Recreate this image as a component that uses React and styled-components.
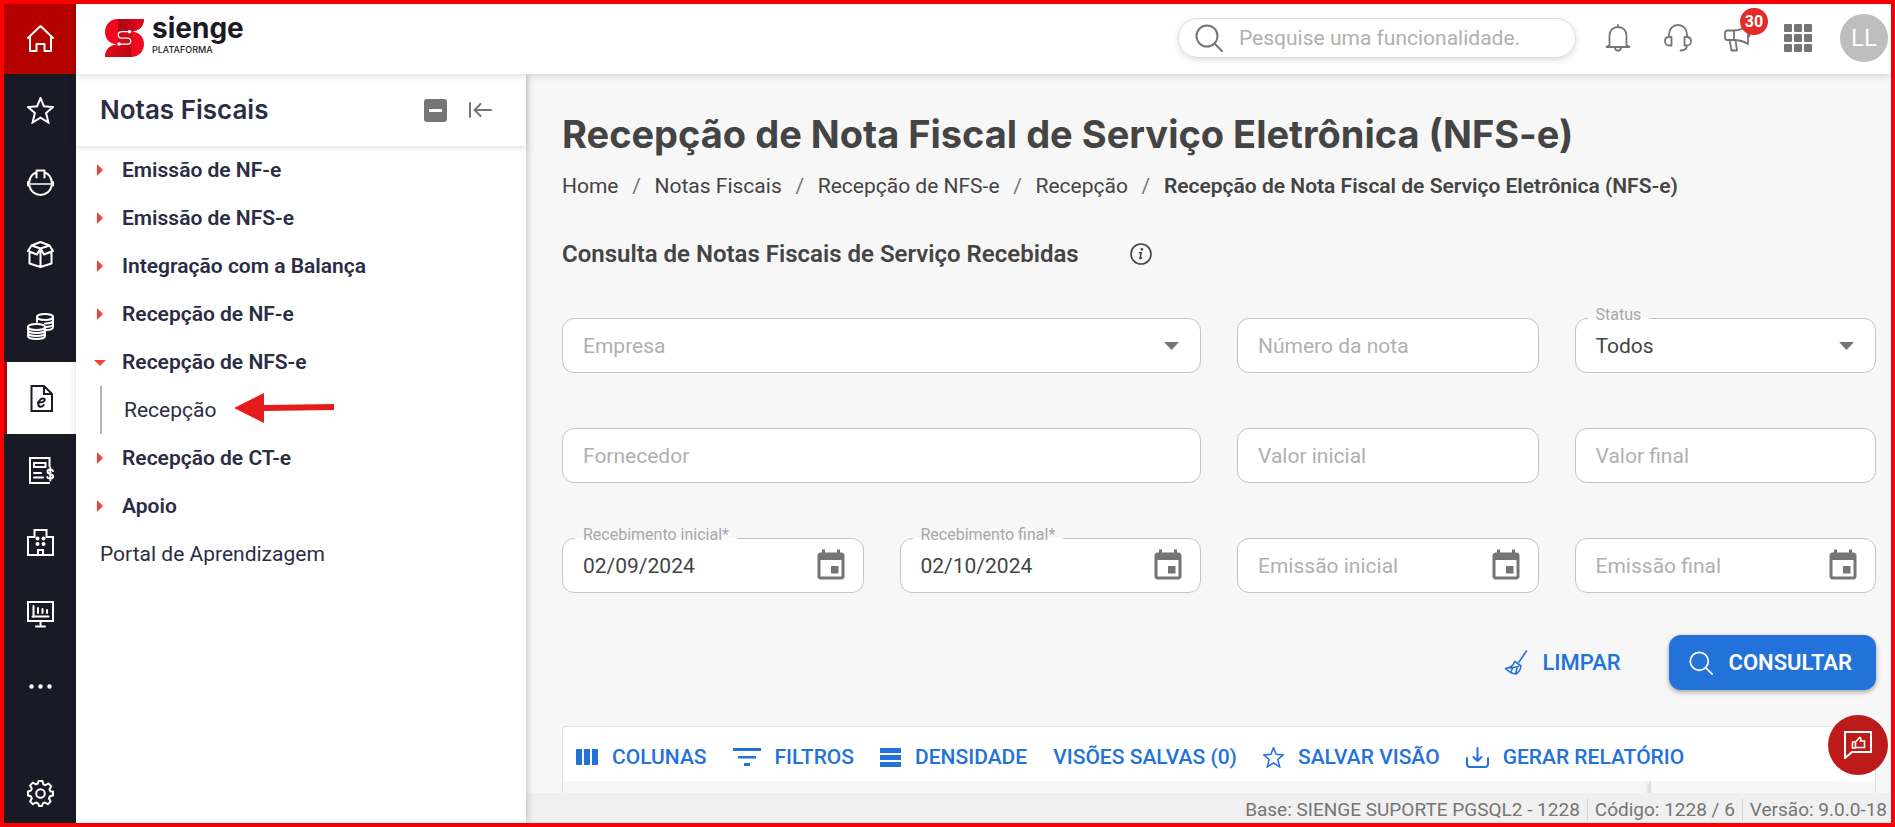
import React from "react";
import styled, { createGlobalStyle, css } from "styled-components";

const color = {
  frame: "#ff0000",
  brand: "#b80000",
  rail: "#1a1a27",
  navy: "#2b2d45",
  text: "#444444",
  muted: "#757575",
  hint: "#b0b0b0",
  line: "#c4c4c4",
  page: "#f7f7f7",
  blue: "#2372d9",
};

const GlobalStyle = createGlobalStyle`
  *, *::before, *::after { box-sizing: border-box; }
  html, body { margin: 0; overflow: hidden; }
  body, button, input, select {
    font-family: Roboto, "Liberation Sans", sans-serif;
    color: ${color.text};
  }
  button { border: 0; padding: 0; background: none; cursor: pointer; }
  a { color: inherit; text-decoration: none; }
  h1, h2, p, ul, ol { margin: 0; padding: 0; list-style: none; }
  svg { display: block; flex: none; }
`;

const Frame = styled.div`
  display: flex;
  height: 100vh;
  border: 4px solid ${color.frame};
  background: #fff;
`;

const Rail = styled.nav`
  flex: none;
  width: 72px;
  display: flex;
  flex-direction: column;
  background: ${color.rail};
`;

const RailButton = styled.button`
  flex: none;
  display: flex;
  align-items: center;
  justify-content: center;
  height: 72px;
  color: #fff;
  ${(p) => p.$kind === "home" && css`height: 70px; padding-bottom: 2px; background: #b50000;`}
  ${(p) => p.$kind === "settings" && css`height: 60px; margin-top: auto;`}
  ${(p) => p.$kind === "active" && css`
    background: #fff;
    color: ${color.rail};
    border-left: 3px solid ${color.brand};
  `}
`;

const Shell = styled.div`
  flex: 1;
  min-width: 0;
  display: flex;
  flex-direction: column;
`;

const TopBar = styled.header`
  position: relative;
  z-index: 2;
  flex: none;
  height: 70px;
  display: flex;
  align-items: center;
  justify-content: space-between;
  padding: 0 3px 2px 29px;
  background: #fff;
  box-shadow: 0 1px 8px rgba(0, 0, 0, 0.16);
`;

const Brand = styled.a`
  display: flex;
  align-items: center;
  gap: 8px;
`;

const BrandText = styled.span`
  display: flex;
  flex-direction: column;
  color: ${color.rail};
`;

const BrandName = styled.span`
  font: 700 28px/24px Inter, sans-serif;
`;

const BrandTag = styled.span`
  font: 500 9px/20px Inter, sans-serif;
`;

const TopTools = styled.div`
  display: flex;
  align-items: center;
`;

const Search = styled.label`
  display: flex;
  align-items: center;
  gap: 16px;
  width: 398px;
  height: 40px;
  margin-right: 12px;
  padding: 0 16px;
  border: 1px solid #dcdcdc;
  border-radius: 20px;
  color: ${color.muted};
  box-shadow: 0 2px 6px rgba(0, 0, 0, 0.14);
`;

const SearchInput = styled.input`
  flex: 1;
  min-width: 0;
  border: 0;
  outline: 0;
  background: none;
  font-size: 21px;
  line-height: 24px;
  padding: 0;
  &::placeholder { color: ${color.hint}; opacity: 1; }
`;

const ToolButton = styled.button`
  position: relative;
  display: flex;
  align-items: center;
  justify-content: center;
  width: 60px;
  height: 48px;
  color: ${color.muted};
`;

const Badge = styled.span`
  position: absolute;
  top: -6px;
  right: 0;
  min-width: 28px;
  height: 27px;
  border-radius: 14px;
  background: #e52a2a;
  color: #fff;
  font-weight: 700;
  font-size: 16px;
  line-height: 27px;
  text-align: center;
`;

const Avatar = styled.button`
  width: 48px;
  height: 48px;
  margin-left: 12px;
  border-radius: 50%;
  background: #bdbdbd;
  color: #fff;
  font-size: 24px;
  line-height: 48px;
`;

const Body = styled.div`
  flex: 1;
  min-height: 0;
  display: flex;
`;

const Sidebar = styled.aside`
  position: relative;
  z-index: 1;
  flex: none;
  width: 450px;
  background: #fff;
  box-shadow: 1px 0 7px rgba(0, 0, 0, 0.22);
`;

const SideHeader = styled.div`
  display: flex;
  align-items: center;
  height: 72px;
  padding: 0 34px 0 24px;
  box-shadow: 0 2px 6px rgba(0, 0, 0, 0.12);
`;

const SideTitle = styled.h2`
  flex: 1;
  color: ${color.navy};
  font: 600 26px/28px Inter, sans-serif;
`;

const SideAction = styled.button`
  margin-left: 21px;
  color: ${color.muted};
`;

const MenuRow = styled.a`
  display: flex;
  align-items: center;
  height: 48px;
  padding-left: 18px;
  color: ${color.navy};
  font-size: 21px;
  font-weight: 600;
`;

const Caret = styled.span`
  flex: none;
  width: 12px;
  margin-right: 16px;
  color: #f44336;
`;

const SubList = styled.ul`
  margin-left: 24px;
  border-left: 2px solid #b3b3b8;
`;

const SubRow = styled.a`
  display: flex;
  align-items: center;
  height: 48px;
  padding-left: 22px;
  gap: 18px;
  color: ${color.navy};
  font-size: 21px;
`;

const PlainRow = styled.a`
  display: flex;
  align-items: center;
  height: 48px;
  padding-left: 24px;
  color: ${color.navy};
  font-size: 21px;
`;

const Main = styled.main`
  flex: 1;
  min-width: 0;
  display: flex;
  flex-direction: column;
  background: ${color.page};
`;

const Content = styled.div`
  flex: 1;
  min-height: 0;
  overflow: hidden;
  padding: 38px 15px 0 36px;
`;

const Title = styled.h1`
  font: 700 38px/44px Inter, sans-serif;
`;

const Crumbs = styled.ol`
  display: flex;
  flex-wrap: wrap;
  margin-top: 18px;
  font-size: 21px;
  line-height: 24px;
`;

const Crumb = styled.li`
  display: flex;
  font-weight: ${(p) => (p.$current ? 600 : 400)};
  &:not(:first-child)::before {
    content: "/";
    width: 36px;
    text-align: center;
    font-weight: 400;
    color: ${color.muted};
  }
`;

const SectionHead = styled.div`
  display: flex;
  align-items: center;
  gap: 51px;
  margin-top: 42px;
`;

const SectionTitle = styled.h2`
  font-weight: 600;
  font-size: 24px;
  line-height: 28px;
`;

const Form = styled.form`
  margin-top: 50px;
`;

const Fields = styled.div`
  display: grid;
  grid-template-columns: repeat(4, 1fr);
  gap: 55px 36px;
`;

const FieldBox = styled.div`
  position: relative;
  display: flex;
  align-items: center;
  grid-column: span ${(p) => p.$span || 1};
  height: 55px;
  border: 1px solid ${color.line};
  border-radius: 12px;
  background: #fff;
`;

const FloatLabel = styled.label`
  position: absolute;
  top: -14px;
  left: 12px;
  padding: 0 8px;
  background: linear-gradient(${color.page} 13px, #fff 13px);
  color: #a8a8a8;
  font-size: 16px;
  line-height: 20px;
`;

const control = css`
  width: 100%;
  height: 53px;
  padding: 0 20px;
  border: 0;
  border-radius: 12px;
  outline: 0;
  background: none;
  font-size: 21px;
`;

const TextInput = styled.input`
  ${control}
  &::placeholder { color: ${color.hint}; opacity: 1; }
`;

const SelectInput = styled.select`
  ${control}
  appearance: none;
  color: ${(p) => (p.$empty ? color.hint : color.text)};
`;

const Adornment = styled.span`
  position: absolute;
  right: ${(p) => (p.$wide ? 14 : 20)}px;
  color: ${color.muted};
  pointer-events: none;
`;

const Actions = styled.div`
  display: flex;
  justify-content: flex-end;
  gap: 16px;
  margin-top: 42px;
`;

const ActionButton = styled.button`
  display: flex;
  align-items: center;
  gap: ${(p) => (p.$primary ? 16 : 14)}px;
  height: 55px;
  padding: 0 ${(p) => (p.$primary ? 24 : 32)}px 0 20px;
  border-radius: 12px;
  font-size: 22px;
  font-weight: 500;
  color: ${color.blue};
  ${(p) => p.$primary && css`
    background: ${color.blue};
    color: #fff;
    font-weight: 600;
    box-shadow: 0 2px 5px rgba(0, 0, 0, 0.35);
  `}
`;

const GridPanel = styled.section`
  margin-top: 36px;
  border: 1px solid #e0e0e0;
  border-radius: 4px 4px 0 0;
  background: #fff;
`;

const GridTools = styled.div`
  display: flex;
  align-items: center;
  gap: 26px;
  height: 54px;
  padding: 6px 13px 0;
`;

const GridTool = styled.button`
  display: flex;
  align-items: center;
  gap: 14px;
  color: ${color.blue};
  font-size: 21px;
  font-weight: 500;
  white-space: nowrap;
`;

const GridHead = styled.div`
  display: flex;
  justify-content: flex-end;
  height: 60px;
  background: ${color.page};
`;

const PinnedColumn = styled.div`
  width: 225px;
  border-left: 1px solid #dcdcdc;
  box-shadow: -2px 2px 4px rgba(0, 0, 0, 0.14);
  clip-path: inset(0 0 0 -6px);
`;

const StatusBar = styled.footer`
  flex: none;
  display: flex;
  align-items: center;
  justify-content: flex-end;
  height: 30px;
  padding: 4px 4px 0 0;
  background: #f0f0f0;
  color: ${color.muted};
  font-size: 19px;
  line-height: 22px;
`;

const StatusItem = styled.span`
  & + & {
    margin-left: 7px;
    padding-left: 7px;
    border-left: 1px solid #d6d6d6;
  }
`;

const Feedback = styled.button`
  position: fixed;
  right: 7px;
  bottom: 52px;
  z-index: 3;
  display: flex;
  align-items: center;
  justify-content: center;
  width: 60px;
  height: 60px;
  border-radius: 50%;
  background: #bd1a1a;
  color: #fff;
`;

function Icon({ w = 27, h = w, box = `0 0 ${w} ${h}`, sw = 2, children, ...rest }) {
  return (
    <svg width={w} height={h} viewBox={box} fill="none" stroke="currentColor" strokeWidth={sw}
      strokeLinecap="round" strokeLinejoin="round" aria-hidden="true" {...rest}>
      {children}
    </svg>
  );
}

const HomeIcon = () => (
  <Icon><path d="M1 13 13.5 1 26 13M3 11.500V26h6.500v-7H17.500v7H24V11.500" /></Icon>
);
const StarIcon = ({ size = 27, sw = 2 }) => (
  <Icon w={size} box="0 0 27 27" sw={sw}>
    <path d="m13.500 1 3.400 8.300 9 .8-6.800 6 2.300 9.400-7.900-4.900-7.900 4.900 2.300-9.400-6.800-6 9-.8z" strokeLinejoin="miter" />
  </Icon>
);
const HelmetIcon = () => (
  <Icon>
    <path d="M9.500 3.500C5 5 2.500 9 2.300 13.500M17.500 3.500c4.500 1.500 7 5.500 7.200 10M2.300 16.500c1 5.500 5.500 9.500 11.200 9.500s10.200-4 11.200-9.500M9.500 8.500v-7h8v7M1 13v3.500M26 13v3.500" />
    <path d="M1 15h25" strokeWidth="1.600" />
  </Icon>
);
const BoxIcon = () => (
  <Icon>
    <path d="M2.500 12.500v10L13.500 26l11-3.500v-10M13.500 9v17M4.500 4.500 13.500 1l9 3.500-9 3zM4.500 4.500 1 10l9 3.500 3.500-6M22.500 4.500 26 10l-9 3.500-3.500-6" />
  </Icon>
);
const CoinsIcon = () => (
  <Icon>
    <ellipse cx="18" cy="4" rx="8" ry="3" />
    <path d="M10 4v5M26 4v10c0 1.700-3 3-7 3M26 7.500c0 1.700-3.500 3-8 3M26 11c0 1.500-3 2.700-7 2.900" />
    <ellipse cx="9.500" cy="14" rx="8.500" ry="3" />
    <path d="M1 14v9c0 1.700 3.800 3 8.500 3s8.500-1.300 8.500-3v-9M1 17c0 1.700 3.800 3 8.500 3s8.500-1.300 8.500-3M1 20c0 1.700 3.800 3 8.500 3s8.500-1.300 8.500-3" />
  </Icon>
);
const InvoiceIcon = () => (
  <Icon strokeLinejoin="miter">
    <path d="M3.500 1H16l8 8v17H3.500zM16 1v8h8" />
    <path d="M9.800 17.500c4.500.2 7-.8 7-2.700 0-1.500-2.500-1.900-4.300-.3-2.400 2.100-3.300 6.900-.2 7.200 1.300.1 2.500-.6 3.400-1.600" />
  </Icon>
);
const BillIcon = () => (
  <Icon strokeLinejoin="miter">
    <path d="M22.500 9V1H3v25h19M7 6h11.500v4H7zM7 16h7M7 20.500h9" />
    <path d="M26 14c-1-2-5.500-2-5.500.7 0 2.800 5.700 2 5.700 4.800 0 2.700-5 2.700-6 .6M23.300 10.500v13" />
  </Icon>
);
const BuildingIcon = () => (
  <Icon strokeLinejoin="miter">
    <path d="M1 26V8h6.500V1h12v7H26v18zM11 26v-5h5v5" />
    <path d="M10.500 9.500h.01M16.500 9.500h.01M10.500 15h.01M16.500 15h.01" strokeWidth="4" />
  </Icon>
);
const MonitorIcon = () => (
  <Icon strokeLinejoin="miter">
    <path d="M1 1h25v19H1zM13.500 20v5M9 25.500h9M6.500 5v11M5.500 15.500h16M11 7v5M15.500 8v4M20 9v3" />
  </Icon>
);
const DotsIcon = () => (
  <Icon><path d="M4.500 13.500h.01M13.500 13.500h.01M22.500 13.500h.01" strokeWidth="4.500" /></Icon>
);
const GearIcon = () => (
  <Icon>
    <circle cx="13.500" cy="13.500" r="4.300" />
    <path d="M11.500 1h4l.9 3.400 2 .8 3-1.700 2.800 2.800-1.700 3 .9 2.100L26 11.500v4l-3.100.7-.9 2.200 1.700 3-2.800 2.800-3-1.700-2.100.9-.8 2.600h-3l-.9-2.600-2.200-.9-3 1.700-2.800-2.800 1.700-3-.9-2.200-2.900-.7v-4l2.900-.9.9-2.200-1.700-3 2.800-2.800 3 1.700 2-.8z" />
  </Icon>
);

const MagnifierIcon = ({ size = 28, sw = 2 }) => (
  <Icon w={size} box="0 0 28 28" sw={sw}>
    <circle cx="12" cy="12" r="10.500" /><path d="m20 20 7 7" />
  </Icon>
);
const BellIcon = () => (
  <Icon w={28} sw={1.800}>
    <path d="M14 1v2M5.500 21V11.500C5.500 6.500 9 3 14 3s8.500 3.500 8.500 8.500V21l3 2h-23zM11 24c.3 1.700 1.400 2.700 3 2.700s2.700-1 3-2.700" />
  </Icon>
);
const HeadsetIcon = () => (
  <Icon w={28} sw={1.800}>
    <path d="M5 13V10.500C5 5 9 1 14 1s9 4 9 9.500V13M7.500 13v8.500H5c-2 0-4-1.500-4-4.300S3 13 5 13zM20.500 13v8.500H23c2 0 4-1.500 4-4.300S25 13 23 13zM23 21.500c0 3-2.500 5-6.500 5" />
  </Icon>
);
const MegaphoneIcon = () => (
  <Icon w={28} sw={1.800}>
    <path d="M10 6.500H3.500C2 6.500 1 7.500 1 9v4.500C1 15 2 16 3.500 16H10zM10 6.500C15 6.500 20 4.500 24 1v19c-4-2.500-9-4-14-4M5.500 16l2 10.500H13L11.500 16M24 8.500c2 .5 2.500 4 0 4.500" />
  </Icon>
);
const AppsIcon = () => (
  <Icon w={28} fill="currentColor" stroke="none">
    {[0, 10, 20].map((y) => [0, 10, 20].map((x) => (
      <rect key={`${x}-${y}`} x={x} y={y} width="8" height="8" rx="1" />
    )))}
  </Icon>
);
const LogoMark = () => (
  <svg width="39" height="38" viewBox="0 0 39 38" aria-hidden="true">
    <defs>
      <linearGradient id="mark" x1="0" x2="1"><stop offset="0" stopColor="#f2051d" /><stop offset="1" stopColor="#ee0b20" /></linearGradient>
      <linearGradient id="fold" x1="0" x2="1"><stop offset="0" stopColor="#a80712" /><stop offset="1" stopColor="#e8061c" /></linearGradient>
      <linearGradient id="foldLow" x1="0" x2="1"><stop offset="0" stopColor="#ec061c" /><stop offset="1" stopColor="#b60613" /></linearGradient>
    </defs>
    <path d="M39 0H13C5 0 0 6 0 13s5 12 12 12.500C5 26 0 31 0 38h26c8 0 13-6 13-13s-5-12-12-12.500C34 12 39 7 39 0z" fill="url(#mark)" />
    <path d="M13 0h26c0 7-5 12-12 12.500H13z" fill="url(#fold)" />
    <path d="M13 12.500h14L26 25.500H13z" fill="#d3071a" />
    <path d="M26 38H0c0-7 5-12 12-12.500h14z" fill="url(#foldLow)" />
    <path d="M24.500 12.700H17c-5 0-5 6.500 0 6.500h5c5 0 5 6 0 6h-8" fill="none" stroke="#fff" strokeWidth="1.300" />
    <circle cx="24.500" cy="12.700" r="1.800" fill="#fff" /><circle cx="14" cy="25" r="1.800" fill="#fff" />
  </svg>
);
const CollapseAllIcon = () => (
  <Icon w={23} fill="currentColor" stroke="none">
    <path fillRule="evenodd" d="M3 0h17a3 3 0 0 1 3 3v17a3 3 0 0 1-3 3H3a3 3 0 0 1-3-3V3a3 3 0 0 1 3-3zM5 10v3h13v-3z" />
  </Icon>
);
const HideMenuIcon = () => (
  <Icon w={24} h={16}><path d="M2 1v14M23 8H7M12.500 2 6.500 8l6 6" /></Icon>
);
const CaretRight = () => (
  <svg width="12" height="12" viewBox="0 0 12 12" fill="currentColor" aria-hidden="true"><path d="m3 0 6 6-6 6z" /></svg>
);
const CaretDown = () => (
  <svg width="12" height="12" viewBox="0 0 12 12" fill="currentColor" aria-hidden="true"><path d="M0 4h12L6 10z" /></svg>
);
const SelectArrow = () => (
  <svg width="16" height="8" viewBox="0 0 16 8" fill="currentColor" aria-hidden="true"><path d="M0 0h15L7.500 8z" /></svg>
);
const CalendarIcon = () => (
  <svg width="36" height="36" viewBox="0 0 24 24" fill="currentColor" aria-hidden="true">
    <path d="M17 12h-5v5h5zM16 1v2H8V1H6v2H5c-1.100 0-2 .9-2 2v14c0 1.100.9 2 2 2h14c1.100 0 2-.9 2-2V5c0-1.100-.9-2-2-2h-1V1zm3 18H5V8h14z" />
  </svg>
);
const InfoIcon = () => (
  <Icon w={22} sw={1.600}>
    <circle cx="11" cy="11" r="10" /><path d="m11.200 9.500-1.200 6 1.500-.6M9.800 9.800l1.400-.3" /><circle cx="11.900" cy="6.300" r="0.600" fill="currentColor" />
  </Icon>
);
const BroomIcon = () => (
  <Icon w={24} h={25} sw={1.600}>
    <path d="m22.500 1-7.500 11M11 11.500l6 4.500M10.500 12C9 16 5.500 18 1.500 18.500c3 3 7 5.300 10.500 5.500 2.500-1.500 4.500-4.500 4.800-7.500M6 18l8.500-1.500M7 21.500 9 17.500M11.500 23.500l1.500-5" />
  </Icon>
);
const ColumnsIcon = () => (
  <Icon w={22} h={16} fill="currentColor" stroke="none">
    <path d="M1 0h5v16H1a1 1 0 0 1-1-1V1a1 1 0 0 1 1-1zM8 0h6v16H8zM16 0h5a1 1 0 0 1 1 1v14a1 1 0 0 1-1 1h-5z" />
  </Icon>
);
const FilterIcon = () => (
  <Icon w={28} h={18} fill="currentColor" stroke="none"><path d="M0 0h28v3H0zM5 8h18v2.500H5zM11 15h6v3h-6z" /></Icon>
);
const DensityIcon = () => (
  <Icon w={21} h={19} fill="currentColor" stroke="none"><path d="M0 0h21v5H0zM0 7h21v5H0zM0 14h21v5H0z" /></Icon>
);
const DownloadIcon = () => (
  <Icon w={23} h={21}><path d="M11.500 1v13M7.500 10l4 4 4-4M1 11v6c0 1.700 1.300 3 3 3h15c1.700 0 3-1.300 3-3v-6" /></Icon>
);
const FeedbackIcon = () => (
  <Icon w={28} strokeLinejoin="miter">
    <path d="M1 1h26v20H8l-7 6z" />
    <path d="M8.500 11h3v6h-3zM11.500 11l4-4.500c1.500 0 1.700 1 1 3.500h4v6.500h-9" strokeWidth="1.600" />
  </Icon>
);
const PointerArrow = () => (
  <svg width="100" height="34" viewBox="0 0 100 34" fill="#e61b1b" aria-hidden="true">
    <path d="M0 15 30 0v12l70-1v6l-70 1v12z" />
  </svg>
);

const railItems = [
  ["Início", HomeIcon, "home"],
  ["Favoritos", StarIcon],
  ["Engenharia", HelmetIcon],
  ["Suprimentos", BoxIcon],
  ["Financeiro", CoinsIcon],
  ["Notas Fiscais", InvoiceIcon, "active"],
  ["Contabilidade", BillIcon],
  ["Imóveis", BuildingIcon],
  ["Relatórios", MonitorIcon],
  ["Mais", DotsIcon],
  ["Configurações", GearIcon, "settings"],
];

const menu = [
  { label: "Emissão de NF-e" },
  { label: "Emissão de NFS-e" },
  { label: "Integração com a Balança" },
  { label: "Recepção de NF-e" },
  { label: "Recepção de NFS-e", children: ["Recepção"] },
  { label: "Recepção de CT-e" },
  { label: "Apoio" },
];

const crumbs = [
  "Home",
  "Notas Fiscais",
  "Recepção de NFS-e",
  "Recepção",
  "Recepção de Nota Fiscal de Serviço Eletrônica (NFS-e)",
];

const fields = [
  { id: "empresa", hint: "Empresa", span: 2, type: "select" },
  { id: "numero", hint: "Número da nota" },
  { id: "status", label: "Status", value: "Todos", type: "select" },
  { id: "fornecedor", hint: "Fornecedor", span: 2 },
  { id: "valor-inicial", hint: "Valor inicial" },
  { id: "valor-final", hint: "Valor final" },
  { id: "recebimento-inicial", label: "Recebimento inicial*", value: "02/09/2024", type: "date" },
  { id: "recebimento-final", label: "Recebimento final*", value: "02/10/2024", type: "date" },
  { id: "emissao-inicial", hint: "Emissão inicial", type: "date" },
  { id: "emissao-final", hint: "Emissão final", type: "date" },
];

const gridTools = [
  ["COLUNAS", ColumnsIcon],
  ["FILTROS", FilterIcon],
  ["DENSIDADE", DensityIcon],
  ["VISÕES SALVAS (0)"],
  ["SALVAR VISÃO", () => <StarIcon size={21} />],
  ["GERAR RELATÓRIO", DownloadIcon],
];

function Field({ id, label, hint, value, span, type }) {
  return (
    <FieldBox $span={span}>
      {type === "select" ? (
        <SelectInput id={id} aria-label={label ? undefined : hint} $empty={!value}>
          <option>{value || hint}</option>
        </SelectInput>
      ) : (
        <TextInput id={id} type="text" aria-label={label ? undefined : hint} placeholder={hint} defaultValue={value} />
      )}
      {label && <FloatLabel htmlFor={id}>{label}</FloatLabel>}
      {type === "select" && <Adornment><SelectArrow /></Adornment>}
      {type === "date" && <Adornment $wide><CalendarIcon /></Adornment>}
    </FieldBox>
  );
}

export default function App() {
  return (
    <>
      <GlobalStyle />
      <Frame>
        <Rail aria-label="Módulos">
          {railItems.map(([name, Glyph, kind]) => (
            <RailButton key={name} type="button" aria-label={name} $kind={kind}><Glyph /></RailButton>
          ))}
        </Rail>
        <Shell>
          <TopBar>
            <Brand href="#">
              <LogoMark />
              <BrandText>
                <BrandName>sienge</BrandName>
                <BrandTag>PLATAFORMA</BrandTag>
              </BrandText>
            </Brand>
            <TopTools>
              <Search>
                <MagnifierIcon />
                <SearchInput type="text" placeholder="Pesquise uma funcionalidade." aria-label="Pesquise uma funcionalidade." />
              </Search>
              <ToolButton type="button" aria-label="Notificações"><BellIcon /></ToolButton>
              <ToolButton type="button" aria-label="Suporte"><HeadsetIcon /></ToolButton>
              <ToolButton type="button" aria-label="Novidades"><MegaphoneIcon /><Badge>30</Badge></ToolButton>
              <ToolButton type="button" aria-label="Aplicativos"><AppsIcon /></ToolButton>
              <Avatar type="button">LL</Avatar>
            </TopTools>
          </TopBar>
          <Body>
            <Sidebar>
              <SideHeader>
                <SideTitle>Notas Fiscais</SideTitle>
                <SideAction type="button" aria-label="Recolher todos"><CollapseAllIcon /></SideAction>
                <SideAction type="button" aria-label="Ocultar menu"><HideMenuIcon /></SideAction>
              </SideHeader>
              <ul>
                {menu.map(({ label, children }) => (
                  <li key={label}>
                    <MenuRow href="#">
                      <Caret>{children ? <CaretDown /> : <CaretRight />}</Caret>
                      {label}
                    </MenuRow>
                    {children && (
                      <SubList>
                        {children.map((name) => (
                          <li key={name}><SubRow href="#">{name}<PointerArrow /></SubRow></li>
                        ))}
                      </SubList>
                    )}
                  </li>
                ))}
                <li><PlainRow href="#">Portal de Aprendizagem</PlainRow></li>
              </ul>
            </Sidebar>
            <Main>
              <Content>
                <Title>Recepção de Nota Fiscal de Serviço Eletrônica (NFS-e)</Title>
                <Crumbs>
                  {crumbs.map((name, i) => {
                    const current = i === crumbs.length - 1;
                    return <Crumb key={name} $current={current}>{current ? name : <a href="#">{name}</a>}</Crumb>;
                  })}
                </Crumbs>
                <SectionHead>
                  <SectionTitle>Consulta de Notas Fiscais de Serviço Recebidas</SectionTitle>
                  <InfoIcon />
                </SectionHead>
                <Form onSubmit={(e) => e.preventDefault()}>
                  <Fields>{fields.map((f) => <Field key={f.id} {...f} />)}</Fields>
                  <Actions>
                    <ActionButton type="reset"><BroomIcon />LIMPAR</ActionButton>
                    <ActionButton type="submit" $primary><MagnifierIcon size={24} />CONSULTAR</ActionButton>
                  </Actions>
                </Form>
                <GridPanel>
                  <GridTools>
                    {gridTools.map(([name, Glyph]) => (
                      <GridTool key={name} type="button">{Glyph && <Glyph />}{name}</GridTool>
                    ))}
                  </GridTools>
                  <GridHead><PinnedColumn /></GridHead>
                </GridPanel>
              </Content>
              <StatusBar>
                <StatusItem>Base: SIENGE SUPORTE PGSQL2 - 1228</StatusItem>
                <StatusItem>Código: 1228 / 6</StatusItem>
                <StatusItem>Versão: 9.0.0-18</StatusItem>
              </StatusBar>
            </Main>
          </Body>
        </Shell>
        <Feedback type="button" aria-label="Enviar feedback"><FeedbackIcon /></Feedback>
      </Frame>
    </>
  );
}
